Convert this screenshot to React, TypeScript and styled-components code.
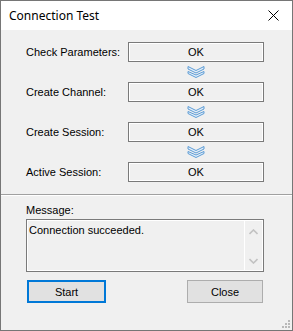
import React from 'react';
import styled, { createGlobalStyle } from 'styled-components';

const GlobalStyle = createGlobalStyle`
  html, body {
    margin: 0;
    padding: 0;
    background: #f0f0f0;
  }
  * {
    box-sizing: border-box;
  }
`;

const steps = ['Check Parameters:', 'Create Channel:', 'Create Session:', 'Active Session:'];

function DownChevron() {
  return (
    <svg width="18" height="12" viewBox="0 0 18 12">
      <g fill="#e4eff9" stroke="#5b9bd5" strokeWidth="1" strokeLinejoin="miter">
        <path d="M1 5.5 L9 9 L17 5.5 L17 7.5 L9 11.5 L1 7.5 Z" />
        <path d="M1 0.5 L9 4.5 L17 0.5 L17 3 L9 7 L1 3 Z" />
      </g>
    </svg>
  );
}

function CloseGlyph() {
  return (
    <svg width="11" height="11" viewBox="0 0 11 11">
      <path d="M0.5 0.5 L10.5 10.5 M10.5 0.5 L0.5 10.5" stroke="#000" strokeWidth="1" />
    </svg>
  );
}

function ScrollArrow({ up }: { up?: boolean }) {
  return (
    <svg width="9" height="6" viewBox="0 0 9 6">
      <path
        d={up ? 'M0.5 5 L4.5 1 L8.5 5' : 'M0.5 1 L4.5 5 L8.5 1'}
        fill="none"
        stroke="#c2c2c2"
        strokeWidth="1.6"
      />
    </svg>
  );
}

function SizeGrip() {
  return (
    <svg width="9" height="9" viewBox="0 0 9 9">
      <g fill="#b8b8b8">
        <rect x="6" y="0" width="2" height="2" />
        <rect x="3" y="3" width="2" height="2" />
        <rect x="6" y="3" width="2" height="2" />
        <rect x="0" y="6" width="2" height="2" />
        <rect x="3" y="6" width="2" height="2" />
        <rect x="6" y="6" width="2" height="2" />
      </g>
    </svg>
  );
}

export default function App() {
  return (
    <>
      <GlobalStyle />
      <Window>
        <TitleBar>
          <Title>Connection Test</Title>
          <CloseButton>
            <CloseGlyph />
          </CloseButton>
        </TitleBar>
        <Body>
          <Steps>
            {steps.map((label, i) => (
              <React.Fragment key={label}>
                <StepRow>
                  <StepLabel>{label}</StepLabel>
                  <StatusBox>OK</StatusBox>
                </StepRow>
                {i < steps.length - 1 && (
                  <ArrowRow>
                    <DownChevron />
                  </ArrowRow>
                )}
              </React.Fragment>
            ))}
          </Steps>
          <Separator />
          <MessageSection>
            <MessageLabel>Message:</MessageLabel>
            <MessageBox>
              <MessageText>Connection succeeded.</MessageText>
              <ScrollBar>
                <ScrollArrow up />
                <ScrollArrow />
              </ScrollBar>
            </MessageBox>
            <ButtonRow>
              <Button $primary>Start</Button>
              <Button>Close</Button>
            </ButtonRow>
          </MessageSection>
          <Grip>
            <SizeGrip />
          </Grip>
        </Body>
      </Window>
    </>
  );
}

const Window = styled.div`
  width: 293px;
  height: 331px;
  border: 1px solid #767676;
  display: flex;
  flex-direction: column;
  background: #f0f0f0;
  font-family: 'Liberation Sans', Arial, sans-serif;
  font-size: 11px;
  color: #000;
`;

const TitleBar = styled.div`
  height: 29px;
  background: #fff;
  display: flex;
  align-items: center;
  justify-content: space-between;
  padding-left: 8px;
`;

const Title = styled.span`
  font-family: 'Noto Sans', 'Open Sans', sans-serif;
  font-size: 12px;
  color: #000;
  padding-bottom: 1px;
`;

const CloseButton = styled.div`
  width: 45px;
  height: 29px;
  display: flex;
  align-items: center;
  justify-content: center;
  padding-left: 8px;
`;

const Body = styled.div`
  flex: 1;
  position: relative;
  display: flex;
  flex-direction: column;
`;

const Steps = styled.div`
  padding: 12px 28px 12px 25px;
  display: flex;
  flex-direction: column;
`;

const StepRow = styled.div`
  height: 20px;
  display: flex;
  align-items: center;
`;

const StepLabel = styled.span`
  width: 102px;
  padding-bottom: 1px;
`;

const StatusBox = styled.div`
  width: 136px;
  height: 20px;
  border: 1px solid #7a7a7a;
  box-shadow: inset 0 0 0 1px #fff;
  display: flex;
  align-items: center;
  justify-content: center;
`;

const ArrowRow = styled.div`
  height: 20px;
  padding-left: 102px;
  width: 238px;
  display: flex;
  align-items: center;
  justify-content: center;
`;

const Separator = styled.div`
  height: 2px;
  border-top: 1px solid #a0a0a0;
  border-bottom: 1px solid #fff;
`;

const MessageSection = styled.div`
  padding: 8px 28px 0 25px;
  display: flex;
  flex-direction: column;
`;

const MessageLabel = styled.span`
  line-height: 13px;
  height: 15px;
`;

const MessageBox = styled.div`
  height: 53px;
  border: 1px solid #7a7a7a;
  box-shadow: inset 0 0 0 1px #fff;
  display: flex;
`;

const MessageText = styled.div`
  flex: 1;
  padding: 4px 2px;
  line-height: 13px;
`;

const ScrollBar = styled.div`
  width: 18px;
  margin: 1px 1px 1px 0;
  border-left: 1px solid #fff;
  display: flex;
  flex-direction: column;
  align-items: center;
  justify-content: space-between;
  padding: 8px 0 6px;
`;

const ButtonRow = styled.div`
  margin-top: 8px;
  display: flex;
  justify-content: space-between;
  padding-left: 1px;
  padding-right: 1px;
`;

const Button = styled.div<{ $primary?: boolean }>`
  width: ${(p) => (p.$primary ? '79px' : '76px')};
  height: 23px;
  background: #e1e1e1;
  border: ${(p) => (p.$primary ? '2px solid #0078d7' : '1px solid #adadad')};
  display: flex;
  align-items: center;
  justify-content: center;
`;

const Grip = styled.div`
  position: absolute;
  right: 1px;
  bottom: 1px;
  display: flex;
`;
